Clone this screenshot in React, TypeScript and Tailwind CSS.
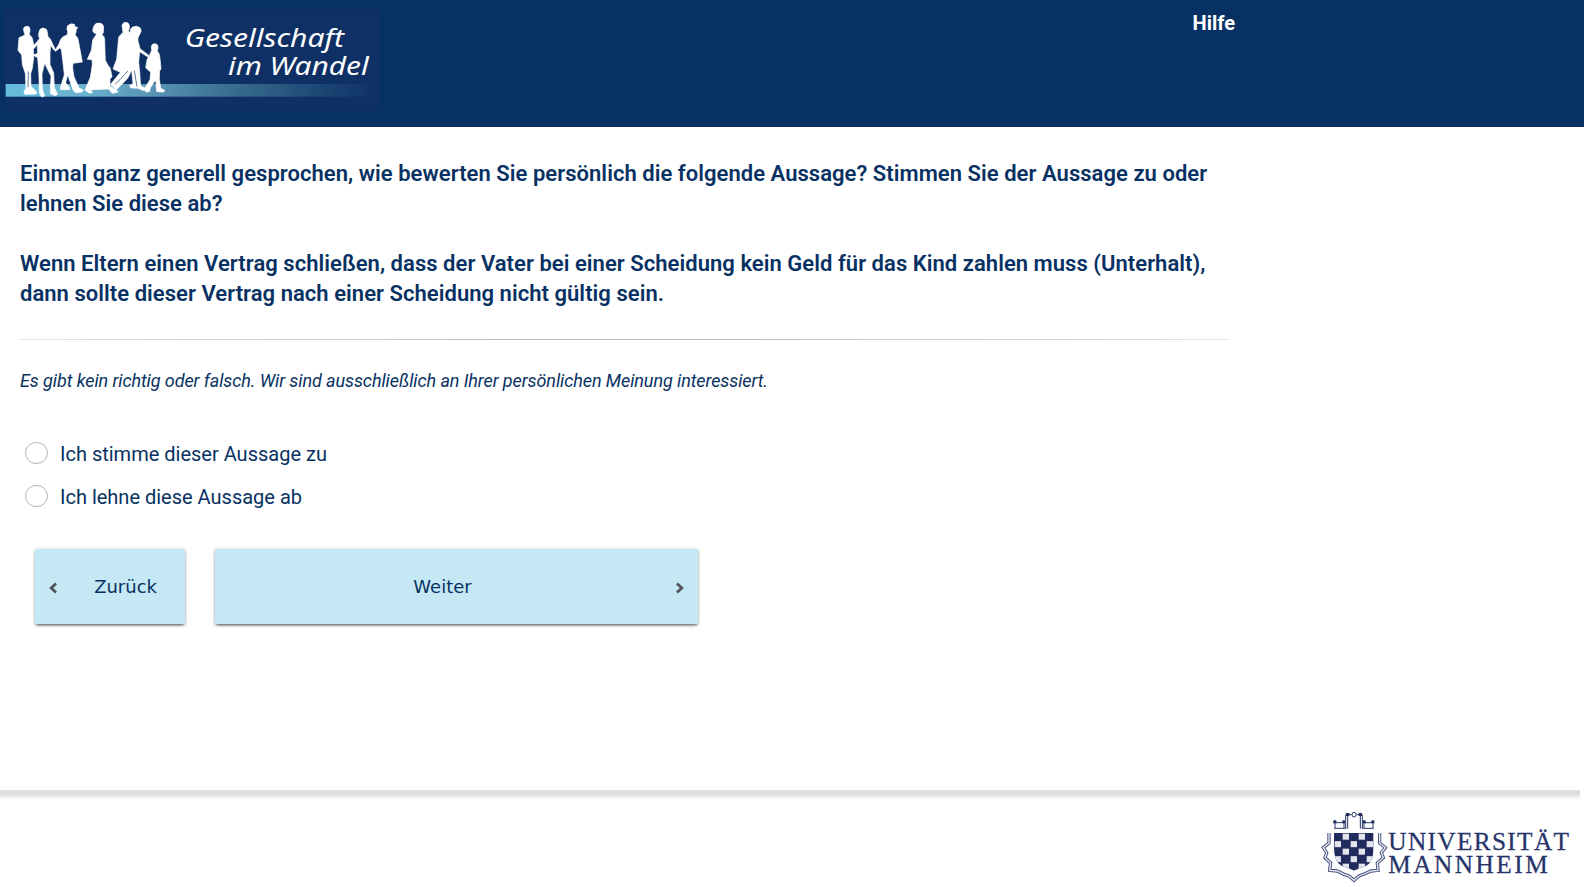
import React from "react";

function SocietyLogo() {
  return (
    <svg width="375" height="101" viewBox="15 27 1125 303" role="img" aria-label="Gesellschaft im Wandel">
      <defs>
        <linearGradient id="band" x1="0" x2="1">
          <stop offset="0" stopColor="#66bcdc" />
          <stop offset="0.2" stopColor="#6bb3cf" />
          <stop offset="0.42" stopColor="#5590b0" />
          <stop offset="0.55" stopColor="#407797" />
          <stop offset="0.8" stopColor="#214d78" />
          <stop offset="1" stopColor="#0e3064" />
        </linearGradient>
      </defs>
      <rect x="15" y="27" width="1125" height="303" fill="#0e3064" />
      <rect x="17" y="252" width="1121" height="38" fill="url(#band)" />
      <g fill="#fff" stroke="#fff" strokeWidth="2">
        <path d="M70 88Q72 78 82 79Q91 80 90 91L88 104Q98 110 99 124L101 136L111 126L119 115Q114 110 117 96Q119 84 130 84Q142 85 142 97L144 110Q153 116 155 126L166 149L177 132Q180 119 188 111L202 104L203 94Q199 88 202 78Q212 68 223 73L225 80L234 83L229 87L228 97L225 105Q235 112 236 127L247 186L219 190L218 204L222 230L237 264L250 270L246 276L226 278L219 269L203 225L197 248L209 264L208 269L182 269L182 260L193 224L188 180L184 149L180 143L167 154L160 148L152 136L150 158L150 193L161 219L163 263L173 282L166 287L151 281L151 269L153 229L134 190L126 222L127 267L134 288L125 291L118 279L117 228L113 173L98 165L106 163L113 160L112 134L100 148L101 174L97 205L92 221L93 258L111 277L108 282L74 283L72 274L78 265L76 220L67 194L65 165L54 151L57 113L75 105Z" />
        <path d="M281 79Q286 68 297 69Q309 69 311 81L310 98L306 104Q314 109 314 119L315 155L316 181L325 197L331 205L336 230L330 237L330 258L349 270L355 276L337 280L326 267L279 269L270 272L278 277L269 280L255 271L259 260L271 232L277 193L276 179L262 178L274 151L278 120L290 102L282 98L278 93Z" />
        <path d="M366 76Q369 66 379 67Q390 70 388 83L385 94L391 98L391 88Q397 78 410 79Q425 82 423 95L417 107Q412 114 414 123L420 146L448 167L455 151L454 139Q456 130 466 131Q476 133 474 144L472 153Q480 161 480 175L483 207L479 212L478 237L482 265L494 271L491 276L470 275L467 240L452 262L448 275L438 276L432 268L450 239L452 217L437 203L441 180L445 172L419 155L416 186L419 215L422 257L437 265L432 272L414 265L393 264L388 257L399 251L395 211L383 235L363 256L349 269L332 253L361 217L339 207L350 178L356 111L369 97Z" />
      </g>
      <g stroke="#0e3064" strokeWidth="2" fill="none">
        <path d="M384 213L346 253M403 212L411 260M85 214L84 262" />
      </g>
      <g fill="#fff" fontFamily="'Noto Sans', 'Open Sans', sans-serif" fontStyle="italic" fontSize="77">
        <text x="554" y="140" textLength="478" lengthAdjust="spacingAndGlyphs">Gesellschaft</text>
        <text x="684" y="226" textLength="422" lengthAdjust="spacingAndGlyphs">im Wandel</text>
      </g>
    </svg>
  );
}

const lightCells = [
  [1, 0],
  [3, 0],
  [0, 1],
  [2, 1],
  [4, 1],
  [1, 2],
  [3, 2],
  [0, 3],
  [2, 3],
  [4, 3],
  [1, 4],
  [3, 4],
];

const wreath =
  "M24 69V99L7 113L17 128L12 143L29 159L26 181L49 183L69 193L84 198L99 211L114 198L130 192L150 183L171 181L169 159L187 143L181 128L193 113L176 99V69";

function UniversityLogo() {
  return (
    <svg width="252" height="76" viewBox="0 0 756 228" role="img" aria-label="Universität Mannheim">
      <defs>
        <clipPath id="shield">
          <path d="M39 69H158V110Q158 146 144 161Q132 172 118 173L99 182L80 173Q64 172 52 160Q39 145 39 110Z" />
        </clipPath>
      </defs>
      <g fill="none" stroke="#2b3768" strokeWidth="3">
        <path
          d="M42 36V54M38 36H46M69 36V54M74 56V14M76 14H92M106 14H122M124 14V56M129 36V54M156 36V54M44 38H68M130 38H154M40 55H74M124 55H158M80 16V56M118 16V56"
          strokeWidth="3"
        />
        <ellipse cx="99" cy="14" rx="6" ry="7" />
        <path d={wreath} strokeWidth="10" stroke="#4b5580" />
        <path d={wreath} strokeWidth="4" stroke="#e6e8ef" />
      </g>
      <g fill="#202c5e">
        <rect x="37" y="31" width="9" height="9" />
        <rect x="64" y="31" width="8" height="9" />
        <rect x="126" y="31" width="8" height="9" />
        <rect x="151" y="31" width="9" height="9" />
        <rect x="75" y="9" width="10" height="9" />
        <rect x="113" y="9" width="10" height="9" />
      </g>
      <g clipPath="url(#shield)">
        <rect x="39" y="69" width="119" height="116" fill="#202c5e" />
        {lightCells.map(([col, row]) => (
          <rect
            key={`${col}-${row}`}
            x={41 + col * 24}
            y={71 + row * 22.5}
            width="19"
            height="18"
            fill="#e3e5ee"
          />
        ))}
      </g>
      <g fill="#27346a" stroke="#27346a" strokeWidth="0.8" fontFamily="'Liberation Serif', 'Times New Roman', serif" fontSize="76">
        <text x="202" y="121" textLength="542" lengthAdjust="spacing">UNIVERSITÄT</text>
        <text x="202" y="189" textLength="478" lengthAdjust="spacing">MANNHEIM</text>
      </g>
    </svg>
  );
}

function Chevron({ flip = false }: { flip?: boolean }) {
  return (
    <svg width="10" height="14" viewBox="0 0 10 14" className={flip ? "mt-0.5 -scale-x-100" : "mt-0.5"}>
      <path d="M2 2.5L6.8 7L2 11.5" fill="none" stroke="#505358" strokeWidth="2.8" />
    </svg>
  );
}

function Option({ label }: { label: string }) {
  return (
    <label className="flex h-[43px] items-center">
      <input
        type="radio"
        name="answer"
        className="h-[22px] w-[23px] appearance-none rounded-full border border-[#b5b5b5] bg-white"
      />
      <span className="ml-3 pt-0.5 text-[20px] leading-[30px]">{label}</span>
    </label>
  );
}

export default function App() {
  return (
    <div className="flex h-[887px] w-full flex-col overflow-hidden bg-white font-['Roboto',sans-serif] text-[#083163]">
      <header className="flex h-[127px] shrink-0 bg-[#083163]">
        <div className="flex w-[1235px] items-start justify-between pt-[9px] pl-[5px]">
          <SocietyLogo />
          <a className="text-[20px] leading-7 font-bold text-white">Hilfe</a>
        </div>
      </header>

      <main className="h-[663px] w-[1248px] shrink-0 px-5 pt-8">
        <div className="text-[22px] leading-[30px] font-semibold tracking-[0.044px] whitespace-nowrap">
          <p>
            Einmal ganz generell gesprochen, wie bewerten Sie persönlich die folgende Aussage? Stimmen Sie der Aussage zu oder
            <br />
            lehnen Sie diese ab?
          </p>
          <p className="mt-[30px]">
            Wenn Eltern einen Vertrag schließen, dass der Vater bei einer Scheidung kein Geld für das Kind zahlen muss (Unterhalt),
            <br />
            dann sollte dieser Vertrag nach einer Scheidung nicht gültig sein.
          </p>
        </div>
        <div className="mt-[30px] h-px bg-linear-to-r from-[#e3e3e3] via-[#b8b8b8] to-[#e3e3e3]" />
        <p className="mt-[26px] text-[18px] leading-[30px] tracking-[-0.09px] italic">
          Es gibt kein richtig oder falsch. Wir sind ausschließlich an Ihrer persönlichen Meinung interessiert.
        </p>
        <div className="mt-[35px] pl-[5px]">
          <Option label="Ich stimme dieser Aussage zu" />
          <Option label="Ich lehne diese Aussage ab" />
        </div>
        <div className="mt-8 flex gap-[30px] pl-[15px] font-['DejaVu_Sans',sans-serif] text-[18px]">
          <button className="flex h-[75px] w-[150px] items-center bg-[#c5e9f4] pr-7 pl-[13px] shadow-[0_2px_3px_-1px_rgba(0,0,0,0.7),0_0_4px_rgba(0,0,0,0.15)]">
            <Chevron flip />
            <span className="ml-auto">Zurück</span>
          </button>
          <button className="flex h-[75px] w-[483px] items-center bg-[#c5e9f4] pr-[13px] shadow-[0_2px_3px_-1px_rgba(0,0,0,0.7),0_0_4px_rgba(0,0,0,0.15)]">
            <span className="flex-1 pr-[5px] text-center">Weiter</span>
            <Chevron />
          </button>
        </div>
      </main>

      <footer className="flex grow flex-col">
        <div className="mr-1 h-2.5 bg-linear-to-b from-[#dfdfdf] from-40% to-white" />
        <div className="flex justify-end pt-2.5 pr-[11px]">
          <UniversityLogo />
        </div>
      </footer>
    </div>
  );
}
